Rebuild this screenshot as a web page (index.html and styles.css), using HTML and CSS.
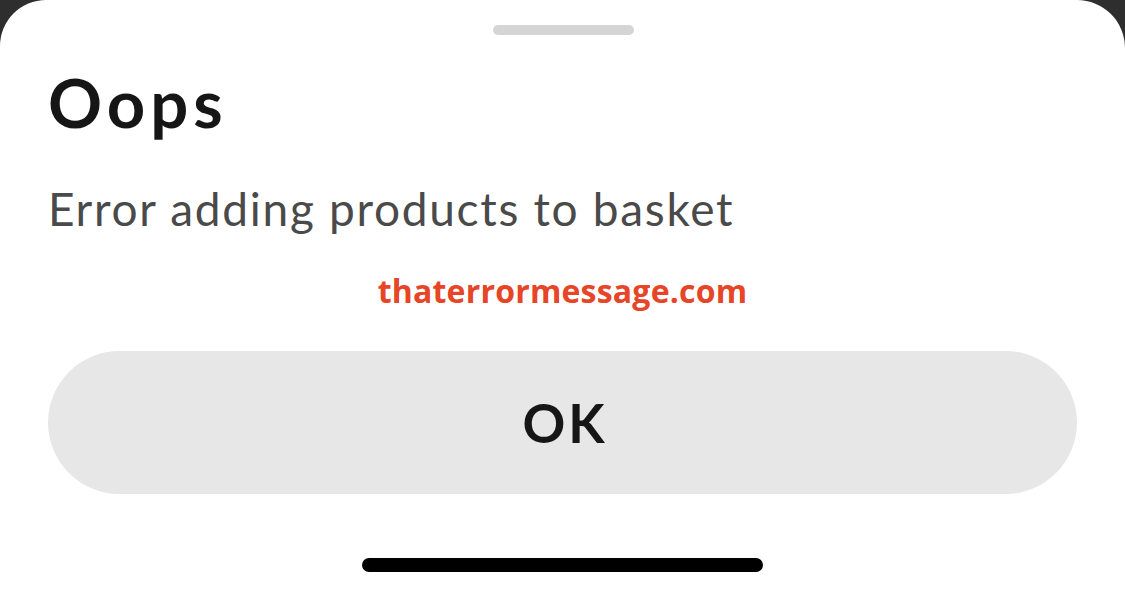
FILE: index.html
```html
<!DOCTYPE html>
<html lang="en">
<head>
    <meta charset="UTF-8">
    <title>Oops</title>
    <link rel="stylesheet" href="styles.css">
</head>
<body>
    <div class="sheet">
        <div class="sheet__handle"></div>
        <h1 class="sheet__title">Oops</h1>
        <p class="sheet__text">Error adding products to basket</p>
        <p class="sheet__mark">thaterrormessage.com</p>
        <button class="sheet__btn">OK</button>
        <div class="sheet__home"></div>
    </div>
</body>
</html>
```

FILE: styles.css
```css
html, body{
    margin: 0;
    height: 100%;
}
body{
    background: #2e2e2e;
    font-family: "Lato", "Noto Sans", sans-serif;
    overflow: hidden;
}
.sheet{
    height: 100%;
    box-sizing: border-box;
    background: #fff;
    border-radius: 46px 48px 0 0;
    padding: 25px 48px 0 48px;
    display: flex;
    flex-direction: column;
}
.sheet__handle{
    width: 141px;
    height: 10px;
    border-radius: 5px;
    background: #d5d5d5;
    align-self: center;
    margin-left: 1px;
}
.sheet__title{
    margin: 27px 0 0 0;
    font-size: 67px;
    line-height: 1.2;
    font-weight: 700;
    letter-spacing: 5px;
    color: #161616;
}
.sheet__text{
    margin: 39px 0 0 0;
    font-size: 46px;
    line-height: 1.2;
    letter-spacing: 1.7px;
    color: #4a4a4a;
}
.sheet__mark{
    margin: 35px 0 0 0;
    font-family: "Open Sans", "Lato", sans-serif;
    font-size: 32px;
    line-height: 1.2;
    font-weight: 700;
    letter-spacing: 0.2px;
    color: #e64527;
    text-align: center;
}
.sheet__btn{
    margin-top: 41px;
    height: 143px;
    border: none;
    border-radius: 72px;
    background: #e7e7e7;
    font-family: inherit;
    font-size: 53px;
    line-height: 1.2;
    font-weight: 700;
    letter-spacing: 3px;
    color: #161616;
    padding: 0 0 0 5px;
}
.sheet__home{
    margin-top: 64px;
    width: 401px;
    height: 14px;
    border-radius: 7px;
    background: #000;
    align-self: center;
}
```
